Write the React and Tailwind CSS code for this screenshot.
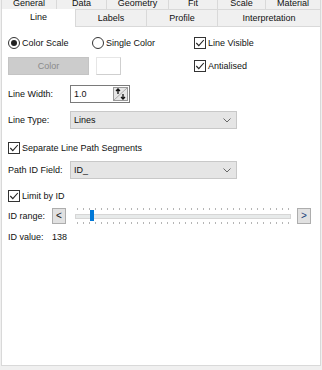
import React from "react";

const font = { fontFamily: '"Liberation Sans", Arial, sans-serif' };

function Check({ label }) {
  return (
    <div className="flex items-center gap-[2px] whitespace-nowrap">
      <div className="w-[12px] h-[12px] border border-[#333] bg-white flex items-center justify-center">
        <svg width="10" height="10" viewBox="0 0 10 10">
          <path d="M1.3 5 L3.8 7.6 L8.8 2" fill="none" stroke="#222" strokeWidth="1.1" />
        </svg>
      </div>
      <span>{label}</span>
    </div>
  );
}

function Radio({ label, on }) {
  return (
    <div className="flex items-center gap-[2px] whitespace-nowrap">
      <div className="w-[12px] h-[12px] rounded-full border border-[#333] bg-white flex items-center justify-center">
        {on && <div className="w-[6px] h-[6px] rounded-full bg-[#222]" />}
      </div>
      <span>{label}</span>
    </div>
  );
}

function Select({ value }) {
  return (
    <div className="w-[167px] h-[18px] border border-[#c8c8c8] bg-[#e5e5e5] flex items-center justify-between pl-[3px] pr-[5px]">
      <span>{value}</span>
      <svg width="8" height="5" viewBox="0 0 8 5">
        <path d="M0.5 0.5 L4 4 L7.5 0.5" fill="none" stroke="#666" strokeWidth="1" />
      </svg>
    </div>
  );
}

const tabTop = ["General", "Data", "Geometry", "Fit", "Scale", "Material"];
const tabTopW = ["w-[56px]", "w-[51px]", "w-[63px]", "w-[50px]", "w-[49px]", "w-[56px]"];

export default function App() {
  const ticks = Array.from({ length: 36 });
  return (
    <div className="w-[322px] h-[370px] bg-[#f0f0f0] text-[9px] leading-[11px] text-[#111] relative overflow-hidden" style={font}>
      <div className="flex h-[10px] items-end pl-[1px] overflow-hidden">
        {tabTop.map((t, i) => (
          <div key={t} className={`${tabTopW[i]} h-[14px] shrink-0 border border-[#d9d9d9] -ml-[1px] first:ml-0 flex items-start justify-center pt-[1px] bg-[#f0f0f0] whitespace-nowrap`}>
            {t}
          </div>
        ))}
      </div>
      <div className="flex h-[17px] pl-[1px] relative z-10">
        <div className="w-[75px] h-[18px] bg-white border-l border-r border-[#d9d9d9] flex items-center justify-center -mt-[1px] pb-[2px]">Line</div>
        <div className="w-[72px] h-[17px] border border-t-0 border-[#d9d9d9] -ml-[1px] flex items-center justify-center">Labels</div>
        <div className="w-[72px] h-[17px] border border-t-0 border-[#d9d9d9] -ml-[1px] flex items-center justify-center">Profile</div>
        <div className="flex-1 h-[17px] border border-t-0 border-[#d9d9d9] -ml-[1px] flex items-center justify-center mr-[1px]">Interpretation</div>
      </div>
      <div className="absolute left-[1px] right-[1px] top-[27px] h-[339px] bg-white border border-[#d9d9d9] border-t-0">
        <div className="pl-[6px] pt-[9px]">
          <div className="flex">
            <div className="w-[186px]">
              <div className="flex h-[14px] items-center">
                <div className="w-[84px]"><Radio label="Color Scale" on /></div>
                <Radio label="Single Color" />
              </div>
              <div className="flex mt-[7px] gap-[7px]">
                <div className="w-[81px] h-[18px] bg-[#cccccc] border border-[#c4c4c4] flex items-center justify-center text-[#8a8a8a]">Color</div>
                <div className="w-[25px] h-[18px] bg-white border border-[#cfcfcf] border-t-[#e6e6e6] border-l-[#e6e6e6]" />
              </div>
            </div>
            <div>
              <div className="h-[14px] flex items-center"><Check label="Line Visible" /></div>
              <div className="h-[14px] flex items-center mt-[9px]"><Check label="Antialised" /></div>
            </div>
          </div>

          <div className="flex items-center mt-[10px] h-[18px]">
            <div className="w-[62px] whitespace-nowrap">Line Width:</div>
            <div className="w-[60px] h-[18px] border border-[#7a7a7a] flex items-center justify-between pl-[3px] pr-[1px]">
              <span>1.0</span>
              <div className="w-[15px] h-[14px] border border-[#999] bg-[#e6e6e6]">
                <svg width="13" height="12" viewBox="0 0 13 12">
                  <path d="M0 12 L13 0" stroke="#999" strokeWidth="0.8" />
                  <path d="M4 1 L4 6 M2 3 L4 1 L6 3" stroke="#111" strokeWidth="1.3" fill="none" />
                  <path d="M9 6 L9 11 M7 9 L9 11 L11 9" stroke="#111" strokeWidth="1.3" fill="none" />
                </svg>
              </div>
            </div>
          </div>

          <div className="flex items-center mt-[8px]">
            <div className="w-[62px] whitespace-nowrap">Line Type:</div>
            <Select value="Lines" />
          </div>

          <div className="mt-[12px] h-[14px] flex items-center"><Check label="Separate Line Path Segments" /></div>

          <div className="flex items-center mt-[6px]">
            <div className="w-[62px] whitespace-nowrap">Path ID Field:</div>
            <Select value="ID_" />
          </div>

          <div className="mt-[10px] h-[14px] flex items-center"><Check label="Limit by ID" /></div>

          <div className="flex items-center mt-[4px] h-[18px]">
            <div className="w-[44px] whitespace-nowrap">ID range:</div>
            <div className="w-[14px] h-[16px] bg-[#e1e1e1] border border-[#adadad] flex items-center justify-center text-[10px] leading-none">&lt;</div>
            <div className="w-[216px] ml-[9px] relative h-[18px]">
              <div className="absolute left-[0px] right-[0px] top-[1px] flex justify-between px-[2px]">
                {ticks.map((_, i) => <div key={i} className="w-[1px] h-[2px] bg-[#b5b5b5]" />)}
              </div>
              <div className="absolute left-0 right-0 top-[7px] h-[5px] bg-[#e7eaea] border border-[#d6d6d6]" />
              <div className="absolute left-[15px] top-[3px] w-[4px] h-[11px] bg-[#0078d7]" />
              <div className="absolute left-[0px] right-[0px] top-[15px] flex justify-between px-[2px]">
                {ticks.map((_, i) => <div key={i} className="w-[1px] h-[2px] bg-[#b5b5b5]" />)}
              </div>
            </div>
            <div className="w-[14px] h-[16px] ml-[6px] bg-[#e1e1e1] border border-[#adadad] flex items-center justify-center text-[10px] leading-none text-[#1a3f7a]">&gt;</div>
          </div>

          <div className="flex items-center mt-[7px]">
            <div className="w-[44px] whitespace-nowrap">ID value:</div>
            <div>138</div>
          </div>
        </div>
      </div>
    </div>
  );
}
